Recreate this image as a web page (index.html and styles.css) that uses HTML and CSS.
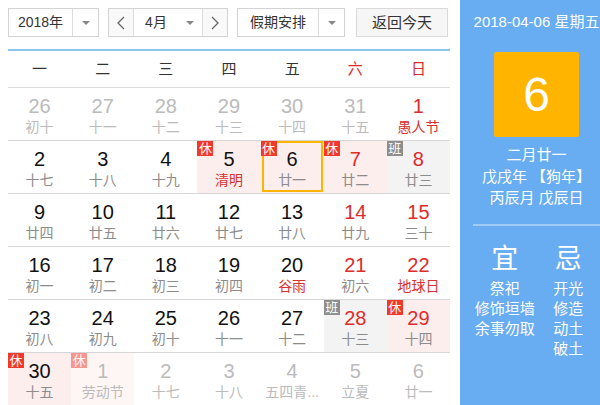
FILE: index.html
```html
<!DOCTYPE html>
<html lang="zh-CN">
<head>
<meta charset="utf-8">
<title>万年历</title>
<link rel="stylesheet" href="styles.css">
</head>
<body>
<div class="page">
  <div class="main">
    <div class="toolbar">
      <div class="select year"><span class="sel-text">2018年</span><span class="sel-arrow"><i class="tri"></i></span></div>
      <div class="month-group">
        <div class="nav"><svg width="8" height="14" viewBox="0 0 8 14"><polyline points="7,1 1,7 7,13" fill="none" stroke="#666" stroke-width="1.3"/></svg></div>
        <div class="month"><span class="m-text">4月</span><span class="m-arrow"><i class="tri"></i></span></div>
        <div class="nav"><svg width="8" height="14" viewBox="0 0 8 14"><polyline points="1,1 7,7 1,13" fill="none" stroke="#666" stroke-width="1.3"/></svg></div>
      </div>
      <div class="select holiday"><span class="sel-text">假期安排</span><span class="sel-arrow"><i class="tri"></i></span></div>
      <div class="today-btn">返回今天</div>
    </div>

    <div class="weekdays">
      <span>一</span><span>二</span><span>三</span><span>四</span><span>五</span><span class="red">六</span><span class="red">日</span>
    </div>

    <div class="weeks">
      <div class="week">
        <div class="day other"><b>26</b><em>初十</em></div>
        <div class="day other"><b>27</b><em>十一</em></div>
        <div class="day other"><b>28</b><em>十二</em></div>
        <div class="day other"><b>29</b><em>十三</em></div>
        <div class="day other"><b>30</b><em>十四</em></div>
        <div class="day other"><b>31</b><em>十五</em></div>
        <div class="day wkend fest"><b>1</b><em>愚人节</em></div>
      </div>
      <div class="week">
        <div class="day"><b>2</b><em>十七</em></div>
        <div class="day"><b>3</b><em>十八</em></div>
        <div class="day"><b>4</b><em>十九</em></div>
        <div class="day rest fest"><span class="tag">休</span><b>5</b><em>清明</em></div>
        <div class="day rest today"><span class="tag">休</span><b>6</b><em>廿一</em></div>
        <div class="day rest wkend"><span class="tag">休</span><b>7</b><em>廿二</em></div>
        <div class="day work wkend"><span class="tag ban">班</span><b>8</b><em>廿三</em></div>
      </div>
      <div class="week">
        <div class="day"><b>9</b><em>廿四</em></div>
        <div class="day"><b>10</b><em>廿五</em></div>
        <div class="day"><b>11</b><em>廿六</em></div>
        <div class="day"><b>12</b><em>廿七</em></div>
        <div class="day"><b>13</b><em>廿八</em></div>
        <div class="day wkend"><b>14</b><em>廿九</em></div>
        <div class="day wkend"><b>15</b><em>三十</em></div>
      </div>
      <div class="week">
        <div class="day"><b>16</b><em>初一</em></div>
        <div class="day"><b>17</b><em>初二</em></div>
        <div class="day"><b>18</b><em>初三</em></div>
        <div class="day"><b>19</b><em>初四</em></div>
        <div class="day fest"><b>20</b><em>谷雨</em></div>
        <div class="day wkend"><b>21</b><em>初六</em></div>
        <div class="day wkend fest"><b>22</b><em>地球日</em></div>
      </div>
      <div class="week">
        <div class="day"><b>23</b><em>初八</em></div>
        <div class="day"><b>24</b><em>初九</em></div>
        <div class="day"><b>25</b><em>初十</em></div>
        <div class="day"><b>26</b><em>十一</em></div>
        <div class="day"><b>27</b><em>十二</em></div>
        <div class="day work wkend"><span class="tag ban">班</span><b>28</b><em>十三</em></div>
        <div class="day rest wkend"><span class="tag">休</span><b>29</b><em>十四</em></div>
      </div>
      <div class="week">
        <div class="day rest"><span class="tag">休</span><b>30</b><em>十五</em></div>
        <div class="day rest other"><span class="tag">休</span><b>1</b><em>劳动节</em></div>
        <div class="day other"><b>2</b><em>十七</em></div>
        <div class="day other"><b>3</b><em>十八</em></div>
        <div class="day other"><b>4</b><em>五四青...</em></div>
        <div class="day other"><b>5</b><em>立夏</em></div>
        <div class="day other"><b>6</b><em>廿一</em></div>
      </div>
    </div>
  </div>

  <aside class="side">
    <div class="side-date">2018-04-06 星期五</div>
    <div class="big-day">6</div>
    <div class="lunar">
      <div>二月廿一</div>
      <div>戊戌年 【狗年】</div>
      <div>丙辰月 戊辰日</div>
    </div>
    <div class="yiji">
      <div class="yj-col">
        <div class="yj-title">宜</div>
        <div>祭祀</div>
        <div>修饰垣墙</div>
        <div>余事勿取</div>
      </div>
      <div class="yj-col">
        <div class="yj-title">忌</div>
        <div>开光</div>
        <div>修造</div>
        <div>动土</div>
        <div>破土</div>
      </div>
    </div>
  </aside>
</div>
</body>
</html>
```

FILE: styles.css
```css
* { box-sizing: border-box; }
html, body { margin: 0; padding: 0; background: #fff; }
body {
  font-family: "Liberation Sans", "Noto Sans CJK SC", sans-serif;
  color: #333;
  width: 600px;
  height: 405px;
  overflow: hidden;
}
.page { display: flex; height: 405px; }
.main { width: 442px; margin-left: 8px; }

/* toolbar */
.toolbar {
  display: flex;
  height: 29px;
  margin-top: 8px;
  font-size: 14px;
  color: #333;
}
.select {
  display: flex;
  border: 1px solid #d3d3d3;
  background: #fff;
}
.sel-text { text-align: center; line-height: 27px; }
.sel-arrow {
  flex: 1;
  border-left: 1px solid #dcdcdc;
  display: flex;
  align-items: center;
  justify-content: center;
}
.tri {
  display: block;
  width: 0; height: 0;
  border-left: 4px solid transparent;
  border-right: 4px solid transparent;
  border-top: 4px solid #888;
}
.year { width: 91px; }
.year .sel-text { width: 63px; }
.month-group {
  display: flex;
  width: 120px;
  margin-left: 9px;
  border: 1px solid #d3d3d3;
}
.nav {
  width: 24px;
  display: flex;
  align-items: center;
  justify-content: center;
  background: #f9f9f9;
}
.month {
  width: 70px;
  display: flex;
  border-left: 1px solid #dcdcdc;
  border-right: 1px solid #dcdcdc;
}
.m-text { width: 44px; text-align: center; line-height: 27px; }
.m-arrow { flex: 1; display: flex; align-items: center; justify-content: center; }
.holiday { width: 108px; margin-left: 9px; }
.holiday .sel-text { width: 80px; }
.today-btn {
  width: 92px;
  margin-left: 11px;
  border: 1px solid #dadada;
  background: #f6f6f6;
  text-align: center;
  line-height: 27px;
  font-size: 15px;
}

/* week header */
.weekdays {
  display: flex;
  margin-top: 12px;
  height: 39px;
  border-top: 2px solid #8ec3ec;
  border-bottom: 1px solid #dadada;
  font-size: 15px;
}
.weekdays span { flex: 1; text-align: center; line-height: 36px; color: #333; }
.weekdays .red { color: #dd2c2c; }

/* day grid */
.week {
  display: flex;
  height: 53px;
  border-bottom: 1px solid #d6d6d6;
}
.day {
  position: relative;
  flex: 1;
  text-align: center;
  padding-top: 8px;
}
.day b {
  display: block;
  font-weight: normal;
  font-size: 20px;
  line-height: 20px;
  color: #111;
}
.day em {
  display: block;
  font-style: normal;
  font-size: 14px;
  line-height: 16px;
  margin-top: 3px;
  color: #8c8c8c;
  white-space: nowrap;
}
.day.wkend b { color: #dd2c2c; }
.day.fest em { color: #d8312f; }
.day.other b { color: #bbb; }
.day.other em { color: #bbb; }
.day.rest { background: #fdeeee; }
.day.rest.other { background: #fef5f5; }
.day.work { background: #f3f3f3; }
.day.today::after {
  content: "";
  position: absolute;
  top: 0; left: 1px; right: 1px; bottom: 1px;
  border: 2px solid #ffb400;
}
.tag {
  position: absolute;
  top: 0; left: 0;
  z-index: 2;
  width: 16px;
  height: 15px;
  background: #f0392b;
  color: #fff;
  font-size: 13px;
  line-height: 15px;
  text-align: center;
}
.tag.ban { background: #8d8d8d; }
.day.other .tag { opacity: .5; }

/* side panel */
.side {
  width: 140px;
  margin-left: auto;
  height: 405px;
  background: #68acf1;
  color: #fff;
  padding: 12px 0 0 13px;
  text-align: center;
}
.side-date {
  font-size: 15px;
  line-height: 20px;
  white-space: nowrap;
}
.big-day {
  width: 85px;
  height: 85px;
  margin: 20px auto 0;
  background: #ffb400;
  border-radius: 2px;
  font-size: 48px;
  line-height: 85px;
  color: #fff;
}
.lunar {
  margin-top: 7px;
  font-size: 15px;
  line-height: 21.5px;
  padding-bottom: 15px;
  border-bottom: 2px solid #9fcaf5;
}
.yiji {
  display: flex;
  margin-top: 18px;
  font-size: 15px;
  line-height: 20px;
}
.yj-col { flex: 1; }
.yj-title {
  font-size: 27px;
  line-height: 30px;
  margin-bottom: 5px;
}
```
